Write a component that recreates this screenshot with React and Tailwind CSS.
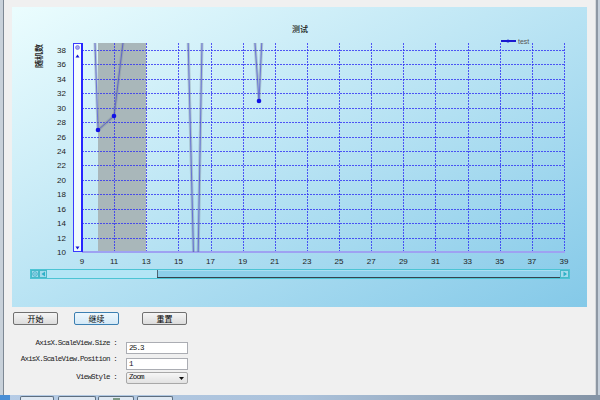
import React from 'react';

const X = (v) => 82 + ((v - 9) * 482) / 30;
const Y = (v) => 252 - ((v - 10) * 202) / 28;
const px = (n) => Math.round(n) + 0.5;

const yTicks = [38, 36, 34, 32, 30, 28, 26, 24, 22, 20, 18, 16, 14, 12, 10];
const xTicks = [9, 11, 13, 15, 17, 19, 21, 23, 25, 27, 29, 31, 33, 35, 37, 39];

// series drawn in screen coords, clipped to the plot area
const seriesPaths = [
    'M94.2 20 L98 130 L114 116 L125.8 20',
    'M187.6 20 L194.3 285 M197.6 285 L202.4 20',
    'M253.4 20 L259 101 L262.8 20',
];
const markers = [
    [98, 130],
    [114, 116],
    [259, 101],
];

const Chart = () => {
    const sans = 'Liberation Sans, Arial, sans-serif';
    const cjk = 'Noto Sans CJK SC, sans-serif';
    return (
        <svg width="575" height="300" viewBox="12 7 575 300" className="block">
            <defs>
                <clipPath id="plot">
                    <rect x="82" y="43" width="483" height="209" />
                </clipPath>
            </defs>

            {/* 标题 */}
            <text x="300" y="32" textAnchor="middle" fontSize="8" fontWeight="500" fill="#1a1a1a" fontFamily={cjk}>
                测试
            </text>
            <text
                x="38"
                y="56"
                textAnchor="middle"
                dominantBaseline="central"
                fontSize="8"
                fontWeight="bold"
                fill="#2a2a2a"
                fontFamily={cjk}
                transform="rotate(-90 38 56)"
            >
                随机数
            </text>

            {/* 选中区域 */}
            <rect x="98" y="43" width="48" height="209" fill="#a9b7ba" />
            <line x1="146.5" y1="43" x2="146.5" y2="252" stroke="#eef6f6" strokeWidth="1" />

            {/* grid */}
            <g stroke="#3030f4" strokeOpacity="0.8" strokeWidth="1" strokeDasharray="2 1">
                {yTicks.filter((v) => v > 10).map((v) => (
                    <line key={'h' + v} x1="82" x2="565" y1={px(Y(v))} y2={px(Y(v))} />
                ))}
                {xTicks.filter((v) => v > 9).map((v) => (
                    <line key={'v' + v} x1={px(X(v))} x2={px(X(v))} y1="43" y2="252" />
                ))}
            </g>

            {/* axis */}
            <line x1="82" x2="565" y1="252" y2="252" stroke="#9ea2f2" strokeWidth="2" />
            <rect x="73.5" y="43.5" width="8" height="208" fill="#ffffff" fillOpacity="0.75" stroke="#3a3aff" strokeWidth="1" />
            <line x1="82" x2="82" y1="43" y2="252" stroke="#2626ff" strokeWidth="2" />
            <circle cx="77.5" cy="47.5" r="2" fill="#a2a2ee" stroke="#6464d8" strokeWidth="0.6" />
            <polygon points="75.5,57.5 79.5,57.5 77.5,54.5" fill="#1414d0" />
            <polygon points="75.5,246.5 79.5,246.5 77.5,249.5" fill="#1414d0" />

            {/* series */}
            <g clipPath="url(#plot)" fill="none" strokeLinejoin="round">
                {seriesPaths.map((d, i) => (
                    <g key={i}>
                        <path d={d} stroke="#8090a0" strokeOpacity="0.45" strokeWidth="3" />
                        <path d={d} stroke="#4040d8" strokeOpacity="0.6" strokeWidth="1" />
                    </g>
                ))}
            </g>
            {markers.map(([cx, cy]) => (
                <circle key={cx} cx={cx} cy={cy} r="2.3" fill="#1212e6" />
            ))}

            {/* labels */}
            {yTicks.map((v) => (
                <text key={'yl' + v} x="66" y={Y(v) + 3} textAnchor="end" fontSize="8" fill="#222" fontFamily={sans}>
                    {v}
                </text>
            ))}
            {xTicks.map((v) => (
                <text key={'xl' + v} x={X(v)} y="264" textAnchor="middle" fontSize="8" fill="#222" fontFamily={sans}>
                    {v}
                </text>
            ))}

            {/* legend */}
            <line x1="501" x2="516" y1="41" y2="41" stroke="#1a1ad0" strokeWidth="2" />
            <circle cx="508" cy="41" r="1.6" fill="#1a1ad0" />
            <text x="518" y="43.5" fontSize="7" fill="#555" fontFamily={sans}>
                test
            </text>

            {/* x scrollbar */}
            <rect x="30.5" y="269.5" width="539" height="9" fill="#b3e5f5" stroke="#4cc4d4" strokeWidth="1" />
            <rect x="31.5" y="270.5" width="7" height="7" fill="#a4dbec" stroke="#48b8c8" strokeWidth="1" />
            <circle cx="35" cy="274" r="2.3" fill="none" stroke="#2ea8c2" strokeWidth="0.8" />
            <line x1="33.8" x2="36.2" y1="274" y2="274" stroke="#2ea8c2" strokeWidth="0.8" />
            <rect x="39.5" y="270.5" width="7" height="7" fill="#a4dbec" stroke="#48b8c8" strokeWidth="1" />
            <polygon points="45,271.5 45,276.5 41.5,274" fill="#2eb0c8" />
            <rect x="157" y="270" width="403" height="8" fill="#8ccfea" />
            <line x1="157" x2="560" y1="270.5" y2="270.5" stroke="#a9def2" strokeWidth="1" />
            <line x1="157.5" x2="157.5" y1="270" y2="278" stroke="#4f6472" strokeWidth="1" />
            <line x1="157" x2="560" y1="277.5" y2="277.5" stroke="#36434d" strokeWidth="1" />
            <rect x="560.5" y="270.5" width="8" height="7" fill="#a4dbec" stroke="#48b8c8" strokeWidth="1" />
            <polygon points="563.5,271.5 563.5,276.5 567,274" fill="#2eb0c8" />
        </svg>
    );
};

const Btn = ({ children, focused }) => (
    <button
        type="button"
        className={
            focused
                ? "w-[45px] h-[13px] border border-[#3c7fb1] rounded-[2px] bg-linear-to-b from-[#eef7fd] to-[#d4e9f7] text-[8px] leading-none flex items-center justify-center text-black font-['Noto_Sans_CJK_SC',sans-serif]"
                : "w-[45px] h-[13px] border border-[#707070] rounded-[2px] bg-linear-to-b from-[#f5f5f5] to-[#dcdcdc] text-[8px] leading-none flex items-center justify-center text-black font-['Noto_Sans_CJK_SC',sans-serif]"
        }
    >
        {children}
    </button>
);

const Row = ({ label, className, children }) => (
    <div className={`flex items-center h-[12px] ${className}`}>
        <div className="w-[105px] text-right text-[7.5px] tracking-[-0.8px] leading-none text-[#222] font-['Liberation_Mono',monospace] whitespace-pre">
            {label}
        </div>
        <div className="ml-[9px]">{children}</div>
    </div>
);

const App = () => {
    const mono = "font-['Liberation_Mono',monospace] text-[7.5px] tracking-[-0.8px] leading-none text-[#111]";
    return (
        <div className="w-[600px] h-[400px] bg-[#f0f0f0] flex flex-col overflow-hidden">
            <div className="flex flex-1 min-h-0">
                <div className="w-[3px] bg-[#c8d1da]" />
                <div className="w-px bg-[#7d8894]" />

                <div className="flex-1 flex flex-col pt-[7px] pl-[8px]">
                    <div className="w-[575px] h-[300px] bg-linear-to-br from-[#ebfdfe] to-[#84c9e8]">
                        <Chart />
                    </div>

                    {/* 按钮 */}
                    <div className="flex mt-[5px] pl-[1px]">
                        <Btn>开始</Btn>
                        <div className="ml-[16px]">
                            <Btn focused>继续</Btn>
                        </div>
                        <div className="ml-[23px]">
                            <Btn>重置</Btn>
                        </div>
                    </div>

                    <Row label="AxisX.ScaleView.Size :" className="mt-[13px]">
                        <input
                            readOnly
                            value="25.3"
                            className={`w-[62px] h-[12px] border border-[#abadb3] bg-white px-[2px] outline-none ${mono}`}
                        />
                    </Row>
                    <Row label="AxisX.ScaleView.Position :" className="mt-[4px]">
                        <input
                            readOnly
                            value="1"
                            className={`w-[62px] h-[12px] border border-[#abadb3] bg-white px-[2px] outline-none ${mono}`}
                        />
                    </Row>
                    <Row label="ViewStyle :" className="mt-[6px]">
                        <div className="w-[62px] h-[12px] border border-[#a8a8a8] rounded-[2px] bg-linear-to-b from-[#f6f6f6] to-[#e2e2e2] flex items-center justify-between pl-[2px] pr-[3px]">
                            <span className={mono}>Zoom</span>
                            <svg width="5" height="3" viewBox="0 0 5 3">
                                <polygon points="0,0 5,0 2.5,3" fill="#111" />
                            </svg>
                        </div>
                    </Row>
                </div>

                <div className="w-px bg-[#d6d9dc]" />
                <div className="w-[2px] bg-[#8e98a4]" />
                <div className="w-[2px] bg-[#c6d0db]" />
            </div>

            {/* 任务栏 */}
            <div className="h-[5px] flex items-end bg-linear-to-r from-[#b6cce6] via-[#abc2db] to-[#8494a6]">
                <div className="w-[10px] h-[5px] bg-[#4a8fd6]" />
                <div className="ml-[10px] w-[34px] h-[4px] border-t border-x border-[#5d6e80] bg-[#dfe8f2] rounded-t-[2px]" />
                <div className="ml-[4px] w-[38px] h-[4px] border-t border-x border-[#5d6e80] bg-[#dfe8f2] rounded-t-[2px]" />
                <div className="ml-[2px] w-[36px] h-[4px] border-t border-x border-[#5d6e80] bg-[#dfe8f2] rounded-t-[2px] flex justify-center">
                    <div className="w-[7px] h-[3px] mt-px bg-[#7d9a86]" />
                </div>
                <div className="ml-[3px] w-[36px] h-[4px] border-t border-x border-[#5d6e80] bg-[#dfe8f2] rounded-t-[2px]" />
            </div>
        </div>
    );
};

export default App;
